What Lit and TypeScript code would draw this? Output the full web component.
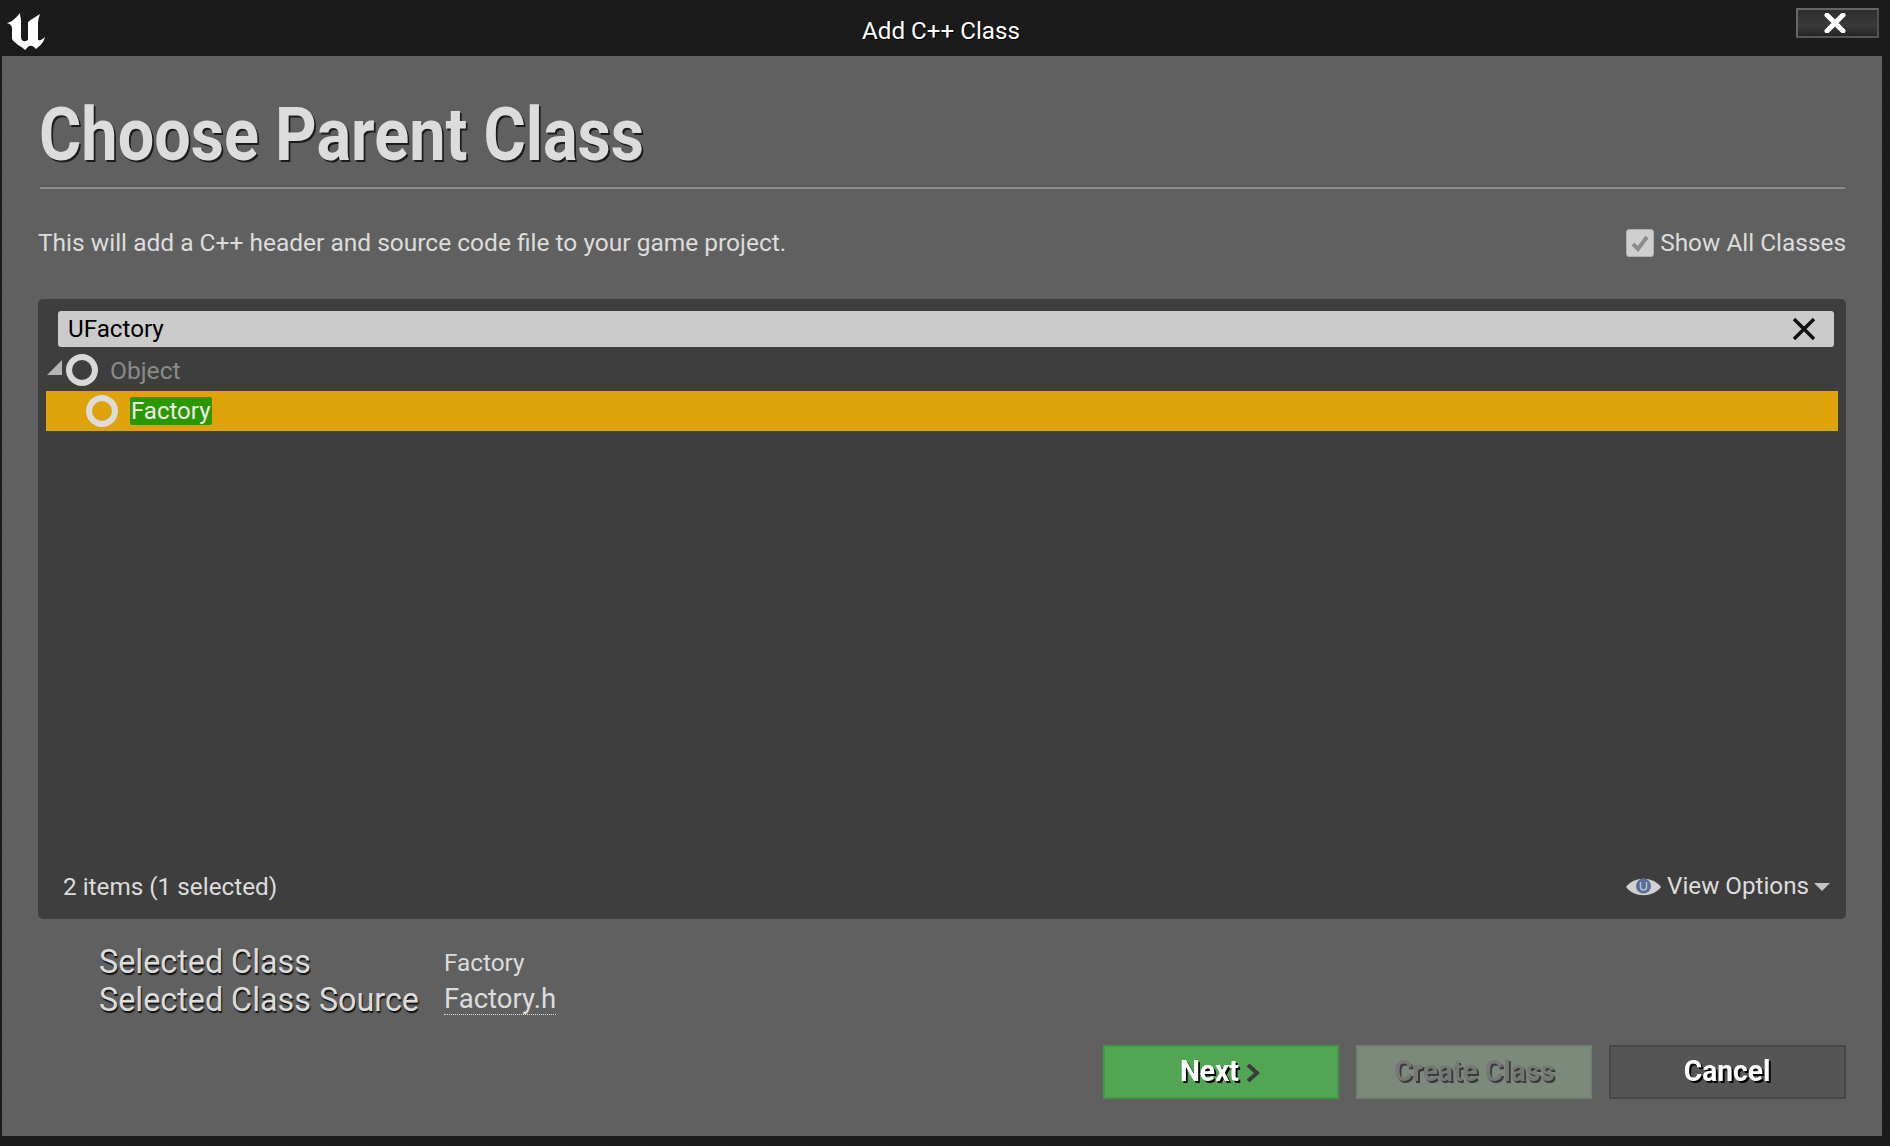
import { LitElement, html, css } from "lit";
import { customElement } from "lit/decorators.js";

@customElement("app-root")
export class AppRoot extends LitElement {
  static styles = css`
    :host { display: block; width: 1890px; height: 1146px; overflow: hidden; font-family: Roboto, sans-serif; }
    * { box-sizing: border-box; }
    .window { width: 1890px; height: 1146px; display: flex; flex-direction: column; background-color: #1a1a1a;
      background-image: repeating-conic-gradient(#1c1c1c 0 25%, #191919 0 50%); background-size: 5px 5px; }
    .bar { height: 56px; flex: none; display: flex; align-items: center; justify-content: center; position: relative; }
    .bar-title { color: #fff; font-size: 24.2px; padding-top: 6px; margin-left: -8px; text-shadow: 1px 1px 0 #000; }
    .logo { position: absolute; left: 7px; top: 13px; width: 38px; height: 37px; filter: blur(0.4px); }
    .close { position: absolute; left: 1796px; top: 8px; width: 83px; height: 30px; display: flex; align-items: center; justify-content: center; padding-right: 6px;
      border: 2px solid #666; border-bottom-color: #555; background: linear-gradient(#2e2e2e, #3a3a3a 60%, #252525); border-right-color: #505050; }
    .content { flex: 1; margin: 0 8px 10px 2px; background: #606060; padding: 0 36px; display: flex; flex-direction: column; }
    .title { margin: 39px 0 12px 1px; height: 80px; line-height: 80px; font-size: 74px; font-weight: 700; color: #dcdcdc; white-space: nowrap;
      text-shadow: 2px 2px 0 #1c1c1c; }
    .title span { display: inline-block; transform: scaleX(0.875); transform-origin: left center; }
    .divider { height: 2px; margin: 0 1px 0 2px; flex: none; background: #8e8e8e; box-shadow: 0 -1px 0 #555; }
    .desc { margin-top: 39px; height: 30px; flex: none; display: flex; align-items: center; justify-content: space-between; font-size: 24.4px; color: #dcdcdc; padding-bottom: 2px; }
    .desc-text { font-size: 24.5px; }
    .check-wrap { display: flex; align-items: center; gap: 6px; }
    .check { width: 28px; height: 28px; border-radius: 3px; background: #cfcfcf; border: 1px solid #b0b0b0; display: flex; align-items: center; justify-content: center; margin-top: 2px; }
    .panel { margin-top: 41px; height: 620px; flex: none; background: #3e3e3e; border-radius: 5px; padding: 12px 8px 0; display: flex; flex-direction: column; }
    .search { margin: 0 4px 0 12px; height: 36px; flex: none; background: #cbcbcb; border-radius: 3px; display: flex; align-items: center; justify-content: space-between;
      padding: 0 18px 0 10px; color: #000; font-size: 24.2px; }
    .tree { flex: 1; }
    .row { display: flex; align-items: center; position: relative; }
    .row.obj { height: 44px; color: #8a8a8a; font-size: 24.6px; padding: 2px 0 0 1px; }
    .row.fac { height: 40px; background: #dea309; padding-left: 40px; font-size: 24px; }
    .tri { width: 15px; height: 15px; margin-top: -6px; flex: none; }
    .ring { width: 32px; height: 32px; flex: none; display: block; filter: blur(0.5px); }
    .obj .ring { margin-left: 4px; margin-right: 12px; }
    .fac .ring { margin-right: 12px; }
    .hl { background: #2a9900; color: #f0e8f0; height: 28px; line-height: 28px; padding: 0 1px; border-radius: 2px; }
    .footer { height: 64px; flex: none; display: flex; align-items: center; justify-content: space-between; padding: 0 8px 2px 17px; color: #dcdcdc; font-size: 24.3px; }
    .view { display: flex; align-items: center; font-size: 24.2px; }
    .eye { margin: 2px 6px 0 0; filter: blur(0.4px); }
    .caret { margin: 2px 0 0 5px; }
    .details { margin: 24px 0 0 61px; display: grid; grid-template-columns: 345px 1fr; grid-auto-rows: 38px; align-items: center; flex: none; }
    .lbl { font-size: 32.3px; color: #dcdcdc; line-height: 38px; margin-top: -1px; text-shadow: 1px 2px 1px #111; }
    .val { font-size: 24.3px; color: #dcdcdc; }
    .link { width: max-content; border-bottom: 1px dotted #e0e0e0; font-size: 27.5px; line-height: 30px; margin-top: -2px; }
    .buttons { margin-top: 26px; display: flex; justify-content: flex-end; gap: 17px; flex: none; }
    .btn { width: 236px; height: 54px; display: flex; align-items: center; justify-content: center; font-size: 30px; line-height: 34px; font-weight: 700; color: #fff;
      text-shadow: 2px 2px 0 #000; border: 2px solid; white-space: nowrap; padding-bottom: 2px; }
    .btn span { display: inline-block; transform: scaleX(0.94); }
    .next { background: #52a552; border-color: #3f9a3f; gap: 0; padding-right: 4px; }
    .next svg { margin-left: 6px; margin-top: 3px; }
    .create { background: #7b8a7b; border-color: #707f70; color: #777; text-shadow: 2px 2px 0 #3a3a3a; }
    .cancel { width: 237px; background: #555; border-color: #484848; }
  `;

  render() {
    return html`
      <div class="window">
        <div class="bar">
          <svg class="logo" viewBox="0 0 38 37">
            <path fill="#fff" d="M0 10 C5 9 9 5 13 0 C13 3 14 5 14 8 L14 24 C14 27 16 29 19 28 L21 27 L21 9 C24 6 29 4 33 1 C32 4 31 7 31 10 L31 27 C33 28 36 26 38 24 C37 29 33 33 29 36 C27 33 24 32 22 33 L18 37 C14 33 8 31 5 26 L5 16 C5 12 3 11 0 10 Z"/>
          </svg>
          <span class="bar-title">Add C++ Class</span>
          <div class="close">
            <svg width="22" height="20" viewBox="0 0 22 20"><path d="M3 2 L19 18 M19 2 L3 18" stroke="#fff" stroke-width="5" stroke-linecap="round"/></svg>
          </div>
        </div>
        <div class="content">
          <div class="title"><span>Choose Parent Class</span></div>
          <div class="divider"></div>
          <div class="desc">
            <span class="desc-text">This will add a C++ header and source code file to your game project.</span>
            <div class="check-wrap">
              <div class="check">
                <svg width="20" height="18" viewBox="0 0 20 18"><path d="M3 10 L8 15 L17 3" fill="none" stroke="#8c8c8c" stroke-width="4"/></svg>
              </div>
              <span>Show All Classes</span>
            </div>
          </div>
          <div class="panel">
            <div class="search">
              <span>UFactory</span>
              <svg width="24" height="24" viewBox="0 0 24 24"><path d="M2 2 L22 22 M22 2 L2 22" stroke="#111" stroke-width="3.4"/></svg>
            </div>
            <div class="tree">
              <div class="row obj">
                <svg class="tri" viewBox="0 0 15 15"><path d="M15 0 V15 H0 Z" fill="#b4b4b4"/></svg>
                <svg class="ring" viewBox="0 0 32 32"><circle cx="16" cy="16" r="13" fill="none" stroke="#d8d8d8" stroke-width="6"/></svg>
                <span>Object</span>
              </div>
              <div class="row fac">
                <svg class="ring" viewBox="0 0 32 32"><circle cx="16" cy="16" r="13" fill="none" stroke="#dcdcdc" stroke-width="6"/></svg>
                <span class="hl">Factory</span>
              </div>
            </div>
            <div class="footer">
              <span>2 items (1 selected)</span>
              <div class="view">
                <svg class="eye" width="35" height="22" viewBox="0 0 35 22">
                  <path d="M0 11 C8 0 27 0 35 11 C27 22 8 22 0 11 Z" fill="#d0d0d0"/>
                  <circle cx="17.5" cy="10" r="7.5" fill="#5a6f96"/>
                  <path d="M14.5 6 V11 A3 3 0 0 0 20.5 11 V6" fill="none" stroke="#b5c0d0" stroke-width="1.5"/>
                </svg>
                <span>View Options</span>
                <svg class="caret" width="16" height="8" viewBox="0 0 16 8"><path d="M0 0 H16 L8 8 Z" fill="#c4c4c4"/></svg>
              </div>
            </div>
          </div>
          <div class="details">
            <span class="lbl">Selected Class</span>
            <span class="val">Factory</span>
            <span class="lbl">Selected Class Source</span>
            <span class="val link">Factory.h</span>
          </div>
          <div class="buttons">
            <div class="btn next"><span>Next</span><svg width="14" height="18" viewBox="0 0 14 18"><path d="M2 1 L11 9 L2 17" fill="none" stroke="#3c3c3c" stroke-width="4"/></svg></div>
            <div class="btn create"><span>Create Class</span></div>
            <div class="btn cancel"><span>Cancel</span></div>
          </div>
        </div>
      </div>
    `;
  }
}
